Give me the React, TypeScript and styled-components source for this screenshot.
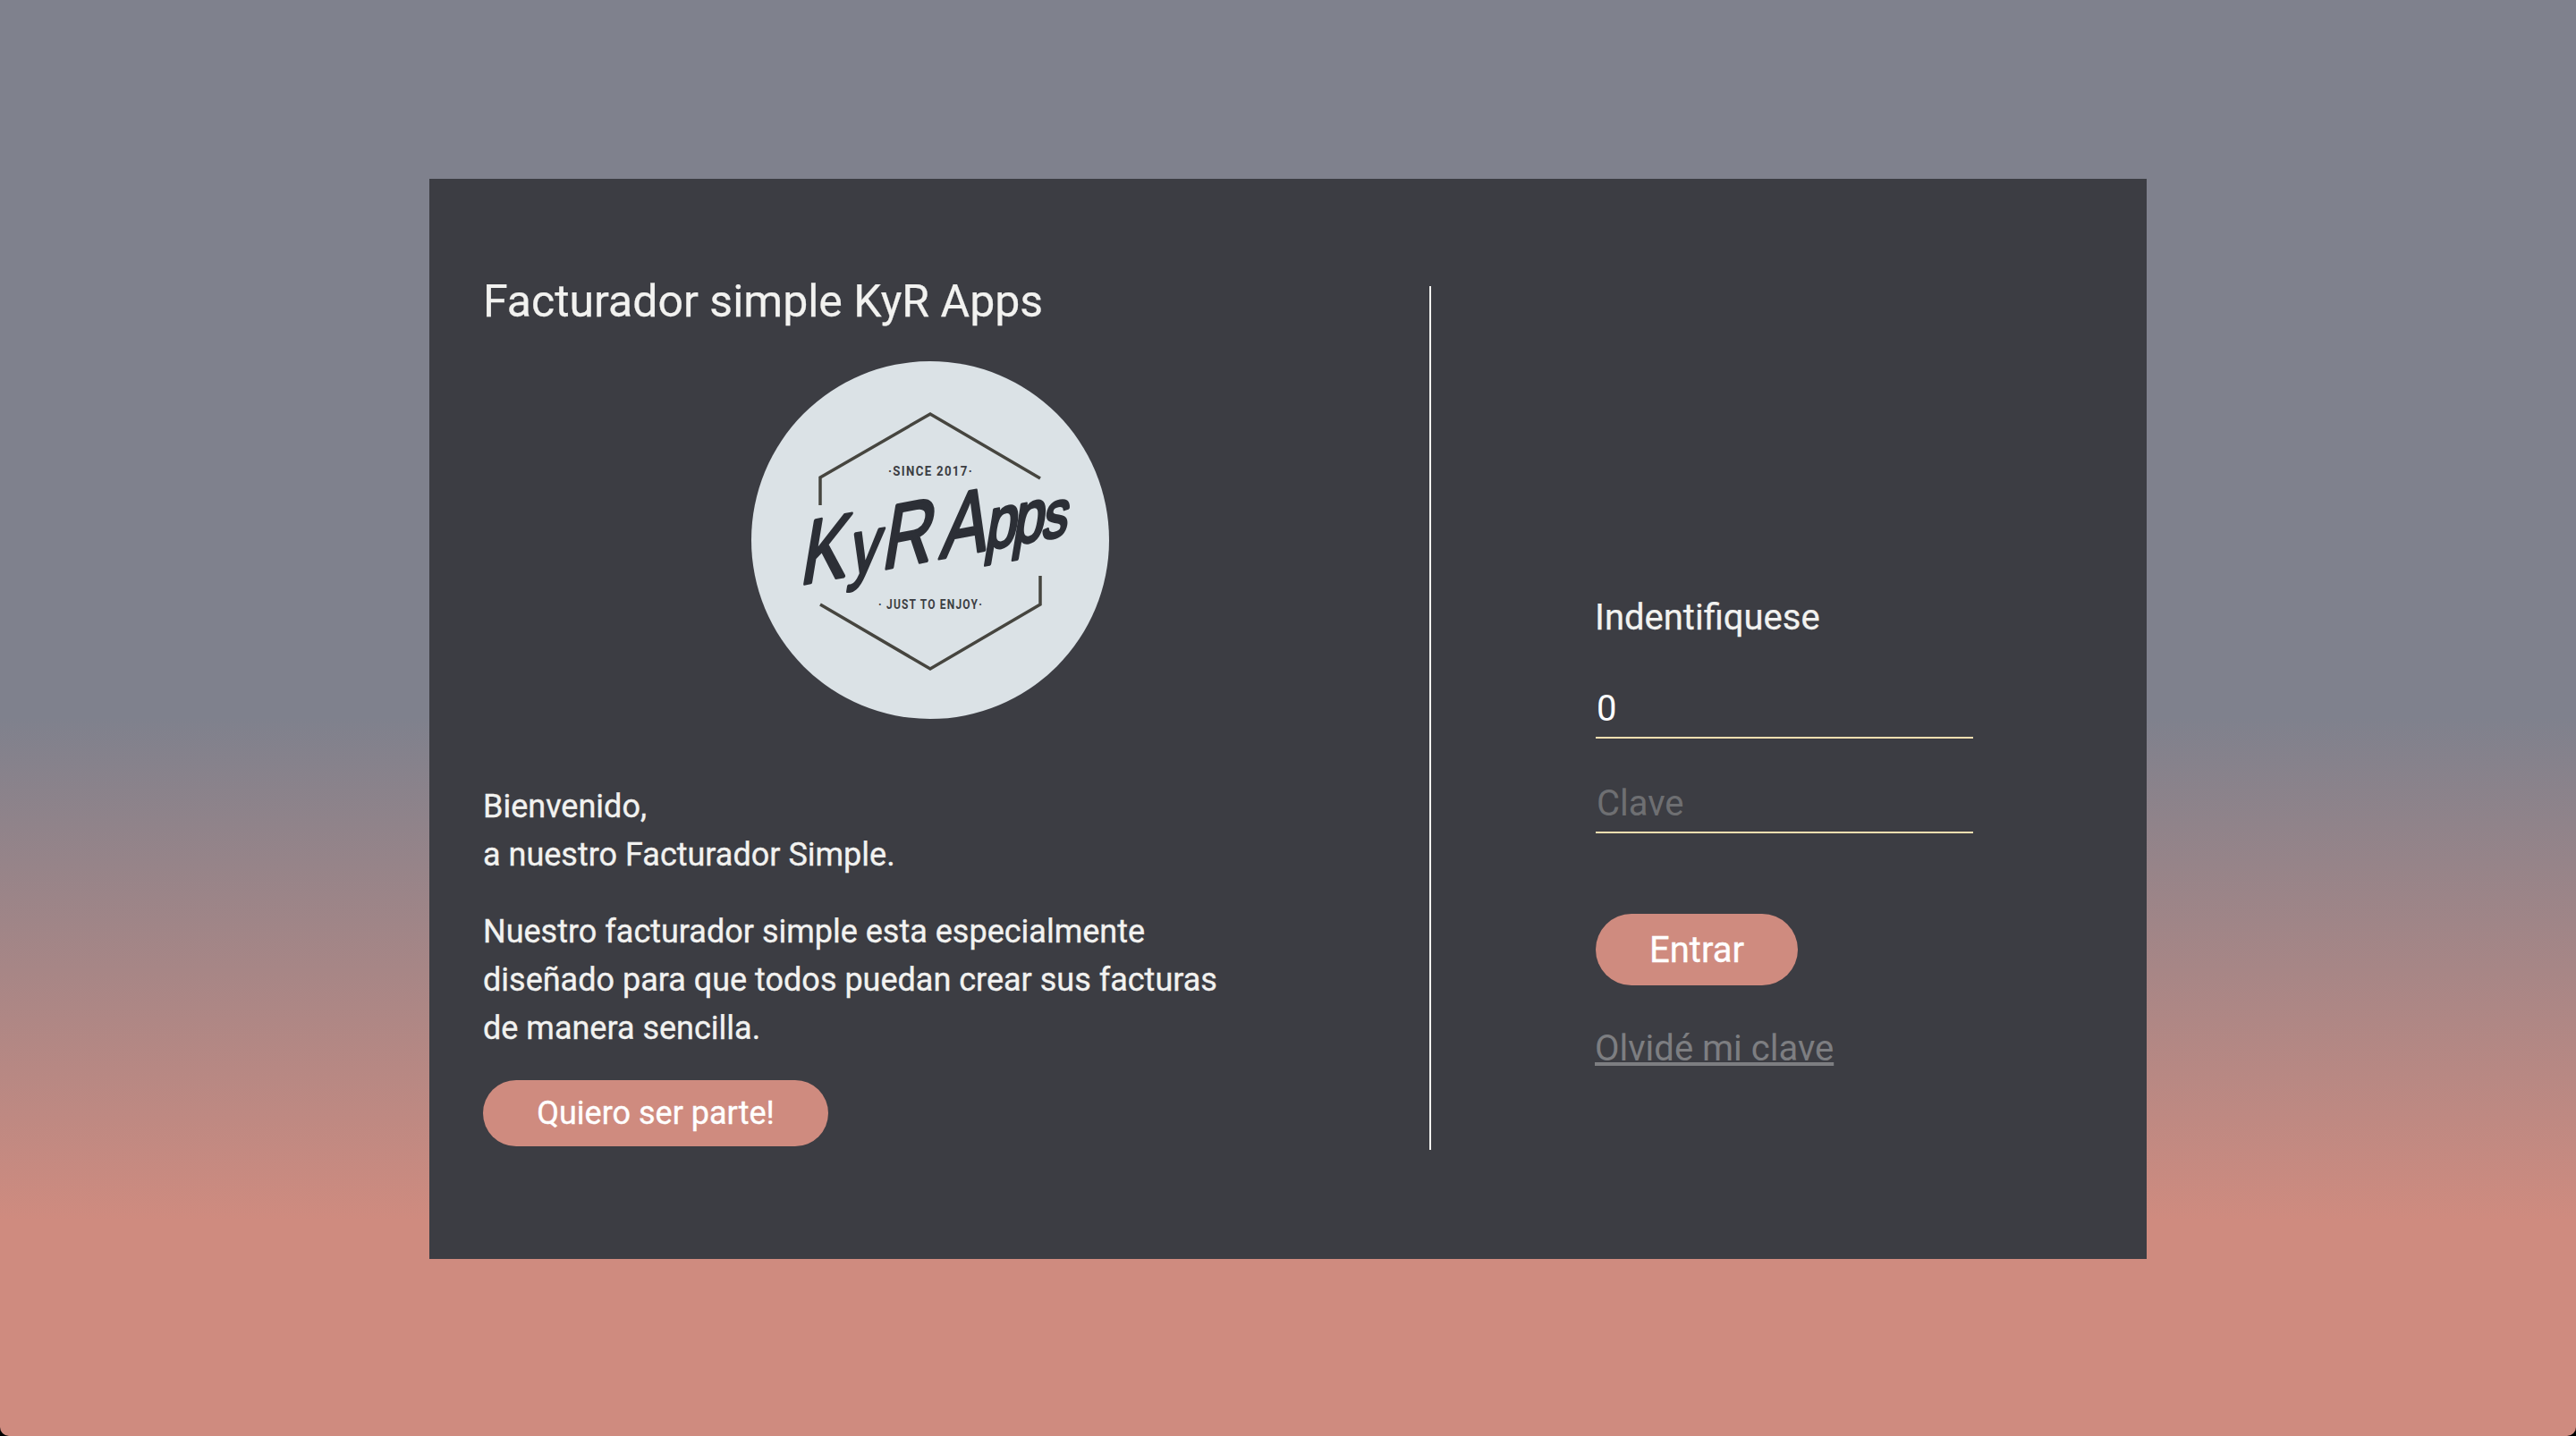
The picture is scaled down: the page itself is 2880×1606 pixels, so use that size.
import React from "react";
import styled, { createGlobalStyle } from "styled-components";

const Global = createGlobalStyle`
  html, body { margin: 0; padding: 0; background: #000; }
  body { font-family: Roboto, "Liberation Sans", sans-serif; }
`;

const Page = styled.div`
  width: 100%;
  height: 1606px;
  box-sizing: border-box;
  padding-top: 200px;
  display: flex;
  justify-content: center;
  align-items: flex-start;
  border-radius: 0 0 10px 10px;
  background: linear-gradient(180deg, #7f818d 0%, #7f818d 50%, #cf8b7f 85%, #cf8b7f 100%);
`;

const Card = styled.main`
  width: 1920px;
  height: 1208px;
  box-sizing: border-box;
  padding: 120px 60px 122px;
  background: #3c3d43;
  display: flex;
  color: #f2f2f0;
`;

const IntroColumn = styled.section`
  width: 1060px;
  padding-right: 58px;
  box-sizing: border-box;
  border-right: 2px solid #f2f2f0;
  flex: none;
`;

const Title = styled.h1`
  margin: 0;
  padding-top: 1px;
  font-size: 50px;
  line-height: 32px;
  font-weight: 400;
  -webkit-text-stroke: 0.25px currentColor;
`;

const LogoWrap = styled.div`
  display: flex;
  justify-content: center;
  margin: 51px 0 70px;
`;

const Paragraph = styled.p`
  margin: 0 0 32px;
  font-size: 36px;
  line-height: 54px;
  width: 840px;
  position: relative;
  top: 1px;
  -webkit-text-stroke: 0.35px currentColor;
`;

const Pill = styled.button<{ $w: number; $h: number; $size: number }>`
  display: block;
  width: ${p => p.$w}px;
  height: ${p => p.$h}px;
  border-radius: ${p => p.$h / 2}px;
  border: 0;
  padding: 0;
  background: #cf8b7f;
  color: #fff;
  font-family: Roboto, sans-serif;
  font-size: ${p => p.$size}px;
  -webkit-text-stroke: 0.35px currentColor;
`;

const LoginColumn = styled.section`
  padding: 343px 0 0 184px;
  display: flex;
  flex-direction: column;
  align-items: flex-start;
`;

const LoginTitle = styled.h2`
  margin: 0 0 43px -1px;
  font-size: 40px;
  line-height: 56px;
  font-weight: 400;
  -webkit-text-stroke: 0.25px currentColor;
`;

const Field = styled.input`
  display: block;
  width: 422px;
  height: 64px;
  margin-bottom: 42px;
  box-sizing: border-box;
  padding: 0 1px 2px;
  background: transparent;
  border: 0;
  border-bottom: 2px solid #f7dfb0;
  outline: none;
  color: #fff;
  font-family: Roboto, sans-serif;
  font-size: 40px;
  &::placeholder { color: #6e6f72; opacity: 1; }
  &:last-of-type { margin-bottom: 90px; }
`;

const Forgot = styled.a`
  margin: 44px 0 0 -1px;
  font-size: 40px;
  line-height: 54px;
  color: #7d7e81;
  text-decoration: underline;
`;

const Logo = () => (
  <svg width="400" height="400" viewBox="0 0 400 400" role="img" aria-label="KyR Apps">
    <circle cx="200" cy="200" r="200" fill="#dbe2e6" />
    <g fill="none" stroke="#46453f" strokeWidth="3.5">
      <path d="M77 161V130L200 59L323 131" />
      <path d="M323 240V272L200 344L77 272" />
    </g>
    <g fontFamily="Roboto, sans-serif" fontWeight="700" fontSize="14" fill="#3b3d42" letterSpacing="1.4">
      <text x="153" y="128" textLength="95" lengthAdjust="spacingAndGlyphs">·SINCE 2017·</text>
      <text x="142" y="277" textLength="117" lengthAdjust="spacingAndGlyphs">· JUST TO ENJOY·</text>
    </g>
    <text
      transform="translate(80 245) rotate(-10.6) skewX(-20) scale(0.8 1)"
      fontFamily="'Liberation Sans', sans-serif"
      fontSize="98"
      fill="#2c2f36"
      stroke="#2c2f36"
      strokeWidth="3.5"
      strokeLinejoin="round"
    >
      <tspan x="-34" y="0">K</tspan>
      <tspan x="36" fontSize="84">y</tspan>
      <tspan x="82">R </tspan>
      <tspan x="165">A</tspan>
      <tspan x="229" fontSize="80">p</tspan>
      <tspan x="268" fontSize="80">p</tspan>
      <tspan x="310" fontSize="72">s</tspan>
    </text>
  </svg>
);

export default function App() {
  return (
    <Page>
      <Global />
      <Card>
        <IntroColumn>
          <Title>Facturador simple KyR Apps</Title>
          <LogoWrap><Logo /></LogoWrap>
          <Paragraph>Bienvenido,<br />a nuestro Facturador Simple.</Paragraph>
          <Paragraph>Nuestro facturador simple esta especialmente diseñado para que todos puedan crear sus facturas de manera sencilla.</Paragraph>
          <Pill $w={386} $h={74} $size={36}>Quiero ser parte!</Pill>
        </IntroColumn>
        <LoginColumn>
          <LoginTitle>Indentifiquese</LoginTitle>
          <Field defaultValue="0" />
          <Field placeholder="Clave" />
          <Pill $w={226} $h={80} $size={40}>Entrar</Pill>
          <Forgot href="#">Olvidé mi clave</Forgot>
        </LoginColumn>
      </Card>
    </Page>
  );
}
